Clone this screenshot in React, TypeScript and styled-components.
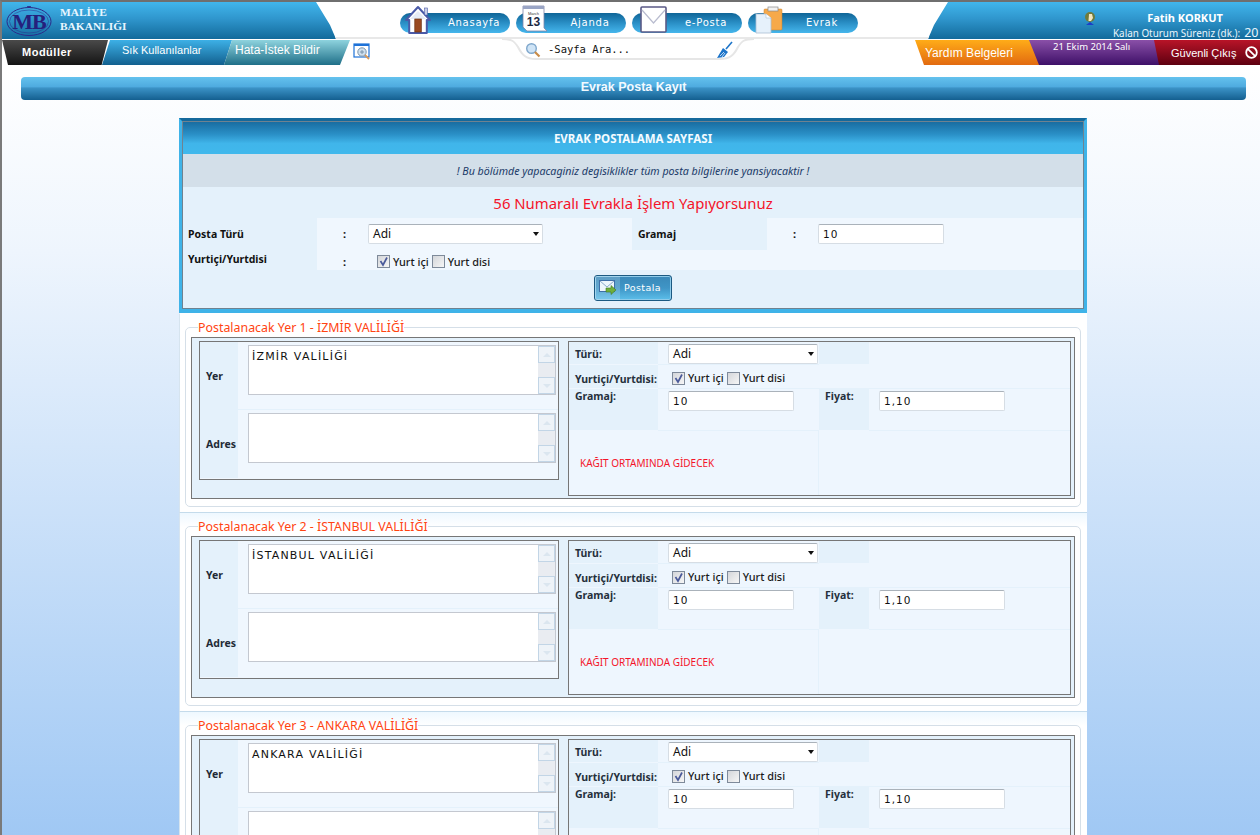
import React from "react";
import styled, { createGlobalStyle } from "styled-components";

const Global = createGlobalStyle`
  html, body { margin: 0; padding: 0; height: 835px; overflow: hidden; background: #fff; }
  * { box-sizing: border-box; }
`;

const UI = `"Noto Sans", "Liberation Sans", sans-serif`;
const MONO = `"DejaVu Sans Mono", "Liberation Mono", monospace`;
const WIDE = `"DejaVu Sans", "Liberation Sans", sans-serif`;

const Page = styled.div`
  height: 835px;
  overflow: hidden;
  border-top: 2px solid #6f6f6f;
  border-left: 2px solid #7a7a7a;
  background: linear-gradient(180deg, #ffffff 8%, #eef5fd 30%, #a0c8f4 100%);
  font-family: ${UI};
`;

const Header = styled.header`
  display: flex;
  height: 38px;
  background: linear-gradient(180deg, #41b6ec 0%, #2f96cd 45%, #126a9b 100%);
  border-bottom: 1px solid #fff;
`;
const Brand = styled.div`
  width: 314px;
  display: flex;
  align-items: center;
  padding-left: 3px;
  gap: 7px;
`;
const BrandText = styled.div`
  font: bold 11.4px/14px "Liberation Serif", serif;
  color: #e8f6ff;
  margin-top: -4px;
`;
const CenterPanel = styled.nav`
  width: 632px;
  display: flex;
  gap: 6px;
  padding: 11px 0 0 84px;
  background: #fff;
  border-bottom: 2px solid #e8e8e8;
  clip-path: polygon(0 0, 100% 0, calc(100% - 14px) 62%, calc(100% - 20px) 100%, 20px 100%, 14px 62%);
`;
const NavPill = styled.div`
  width: 110px;
  height: 20px;
  border-radius: 10px;
  background: linear-gradient(180deg, #0f6597 0%, #2a8fc6 50%, #45b6ec 100%);
  display: flex;
  align-items: flex-start;
`;
const NavIcon = styled.span`
  display: block;
  width: 34px;
  height: 30px;
  margin: -8px 0 0 4px;
  flex: none;
`;
const NavLabel = styled.span`
  flex: 1;
  text-align: center;
  color: #fff;
  font: 10px/20px ${WIDE};
  letter-spacing: 0.75px;
`;
const UserBox = styled.div`
  flex: 1;
  display: flex;
  padding: 9px 0 0 136px;
  color: #fff;
`;
const UserText = styled.div`
  margin-left: 14px;
  width: 150px;
  text-align: center;
`;
const UserName = styled.div`
  font: bold 11px/14px ${UI};
  color: #fff;
`;
const Session = styled.div`
  font: 9.9px/14px ${UI};
  white-space: nowrap;
  color: #eaf6fd;
  margin: 1px 0 0 3px;
  display: flex;
  align-items: baseline;
  gap: 4px;
`;
const SessionNum = styled.span`
  font-size: 12.5px;
`;

const SubBar = styled.div`
  display: flex;
  height: 25px;
  background: #fff;
`;
const Tab = styled.div<{ $bg: string; $w: number; $clip: string; $ml?: number; $pl: number; $fs?: number }>`
  width: ${(p) => p.$w}px;
  margin-left: ${(p) => p.$ml ?? 0}px;
  background: ${(p) => p.$bg};
  clip-path: ${(p) => p.$clip};
  padding-left: ${(p) => p.$pl}px;
  color: #fff;
  font: ${(p) => p.$fs ?? 11.5}px/21px "Liberation Sans", sans-serif;
  white-space: nowrap;
`;
const BoldTab = styled(Tab)`
  font: bold 11px/25px "Liberation Sans", sans-serif;
  letter-spacing: 0.5px;
`;
const HelpTab = styled(Tab)`
  line-height: 26px;
`;
const DateTab = styled(Tab)`
  font: 9.5px/13px ${UI};
`;
const RedTab = styled(Tab)`
  display: flex;
  align-items: center;
  gap: 9px;
  line-height: 26px;
`;
const ZoomIcon = styled.span`
  display: block;
  width: 18px;
  height: 18px;
  margin: 3px 0 0 3px;
  flex: none;
`;
const SearchBox = styled.div`
  position: relative;
  width: 252px;
  height: 24px;
  margin: -2px 0 0 131px;
  display: flex;
  align-items: center;
  padding: 0 20px 3px 23px;
  flex: none;
`;
const SearchOutline = styled.svg`
  position: absolute;
  left: 0;
  top: 0;
`;
const SearchGlyph = styled.span`
  position: relative;
  display: block;
  height: 16px;
`;
const BroomGlyph = styled(SearchGlyph)`
  height: 18px;
  margin: 3px 0 0 auto;
`;
const SearchText = styled.span`
  font: 10.5px/14px ${MONO};
  color: #111;
  margin-left: 7px;
  position: relative;
`;
const RightTabs = styled.div`
  display: flex;
  margin-left: auto;
`;

const TitleBar = styled.h1`
  margin: 12px 14px 18px 19px;
  height: 23px;
  border-radius: 4px;
  background: linear-gradient(180deg, #64c2ee 0%, #4fabdf 42%, #3b92c6 48%, #145f90 100%);
  color: #f2faff;
  font: bold 12.5px/20px "Liberation Sans", sans-serif;
  text-align: center;
`;

const Main = styled.main`
  width: 908px;
  margin-left: 177px;
  background: #fff;
`;
const FormBox = styled.section`
  border: 3px solid #3fb3e8;
  border-top-color: #15699c;
  border-bottom-width: 4px;
`;
const FormInner = styled.div`
  outline: 1px solid #6f8290;
  outline-offset: -1px;
  background: #e4f1fb;
`;
const FormHead = styled.div`
  height: 33px;
  background: linear-gradient(180deg, #176a9e 0%, #2a8fc6 40%, #40b5ea 68%, #40b8ec 100%);
  color: #f4fbff;
  font: bold 11.5px/35px ${UI};
  text-align: center;
`;
const Notice = styled.div`
  height: 33px;
  background: #d3dfe9;
  color: #1a3a68;
  font: italic 10.66px/34px ${UI};
  text-align: center;
`;
const RedTitle = styled.div`
  height: 31px;
  color: #f4142a;
  font: 14.9px/33px ${UI};
  text-align: center;
`;
const FormGrid = styled.div`
  display: grid;
  grid-template-columns: 135px 315px 135px 1fr;
  grid-template-rows: 32px 20px;
  background: #f0f7fe;
`;
const LabelCell = styled.div<{ $light?: boolean; $lh?: number }>`
  background: ${(p) => (p.$light ? "transparent" : "#e4f1fb")};
  padding-left: 6px;
  font: bold 10.5px/${(p) => p.$lh ?? 32}px ${UI};
  color: #111;
`;
const ValueCell = styled.div<{ $row?: boolean }>`
  display: flex;
  align-items: ${(p) => (p.$row ? "center" : "flex-start")};
  padding: ${(p) => (p.$row ? 3 : 6)}px 0 0 26px;
  font: bold 11px/20px ${UI};
  color: #111;
`;
const Colon = styled.span`
  width: 25px;
  flex: none;
  line-height: 20px;
`;
const CheckGap = styled.span`
  width: 9px;
  flex: none;
`;
const SelectBox = styled.div<{ $w: number }>`
  position: relative;
  width: ${(p) => p.$w}px;
  height: 20px;
  background: #fff;
  border: 1px solid #d6dde4;
  border-top-color: #aab2ba;
  border-radius: 2px;
  font: 12px/18px ${UI};
  color: #111;
  padding-left: 4px;
  &::after {
    content: "";
    position: absolute;
    right: 3px;
    top: 7px;
    border: 4px solid transparent;
    border-top: 4px solid #111;
    border-left-width: 3.5px;
    border-right-width: 3.5px;
  }
`;
const TextInput = styled.input<{ $w: number }>`
  display: block;
  width: ${(p) => p.$w}px;
  height: 20px;
  background: #fff;
  border: 1px solid #d6dde4;
  border-top-color: #aab2ba;
  border-radius: 2px;
  font: 10.5px/18px ${WIDE};
  letter-spacing: 1px;
  color: #111;
  padding: 0 4px;
  outline: none;
`;
const CheckRow = styled.div`
  display: flex;
  align-items: center;
  font: 500 10.9px/14px ${UI};
  color: #1a1a1a;
`;
const CheckBox = styled.span`
  display: block;
  width: 13px;
  height: 13px;
  border: 1px solid #7e8a9a;
  background: linear-gradient(135deg, #d4d6da, #f6f6f6);
  margin-right: 3px;
  flex: none;
`;
const CheckMark = styled.svg`
  display: block;
`;
const CheckText = styled.span`
  margin-right: 3px;
`;
const ButtonRow = styled.div`
  height: 39px;
  display: flex;
  justify-content: center;
  padding: 5px 0 0 0;
`;
const PostButton = styled.div`
  width: 78px;
  height: 26px;
  border: 1px solid #1c5a82;
  border-radius: 3px;
  box-shadow: inset 0 0 0 1px #8ecbea;
  background: linear-gradient(180deg, #3a88b8 0%, #3f95c6 50%, #5cbfea 100%);
  display: flex;
  color: #fff;
  font: 9.5px/23px ${WIDE};
  letter-spacing: 0.4px;
`;
const ButtonIcon = styled.span`
  display: block;
  width: 25px;
  height: 24px;
  background: rgba(255, 255, 255, 0.18);
  padding: 4px 0 0 4px;
  margin-right: 4px;
`;

const Section = styled.section<{ $first?: boolean }>`
  height: 199px;
  padding: 7px 6px 0 5px;
  border-left: 1px solid #d6e4ef;
  border-top: 1px solid ${(p) => (p.$first ? "#fff" : "#c4dbeb")};
  background: linear-gradient(180deg, ${(p) => (p.$first ? "#fff" : "#eef8ff")} 0, #fff 14px);
`;
const Field = styled.fieldset`
  margin: 0;
  padding: 0 5px 5px 5px;
  height: 186px;
  border: 1px solid #d5dfe8;
  border-radius: 5px;
`;
const Legend = styled.legend`
  margin-left: 7px;
  padding: 0;
  color: #ff4412;
  font: 12.4px/13px ${UI};
  white-space: nowrap;
`;
const SectionFrame = styled.div`
  height: 162px;
  margin-top: 3px;
  border: 1px solid #767676;
  background: #e4f1fb;
  display: flex;
  padding: 3px 3px 0 7px;
  gap: 9px;
`;
const LeftTable = styled.div`
  width: 360px;
  height: 139px;
  border: 1px solid #767676;
  background: #f0f7fe;
`;
const PlaceRow = styled.div`
  height: 68px;
  display: flex;
  border-bottom: 1px solid #e4f1fb;
  &:last-child { border-bottom: 0; }
`;
const PlaceLabel = styled.div`
  width: 38px;
  background: #e4f1fb;
  flex: none;
  padding-left: 6px;
  font: bold 10.5px/68px ${UI};
  color: #1f2a36;
`;
const AreaWrap = styled.div`
  position: relative;
  width: 308px;
  height: 50px;
  margin: 3px 0 0 10px;
`;
const Area = styled.textarea`
  display: block;
  width: 100%;
  height: 100%;
  resize: none;
  overflow: hidden;
  border: 1px solid #c4c8d0;
  background: #fff;
  padding: 3px 22px 0 3px;
  font: 11px/15px ${WIDE};
  letter-spacing: 1.2px;
  color: #111;
  outline: none;
`;
const FakeScroll = styled.div`
  position: absolute;
  right: 1px;
  top: 1px;
  bottom: 1px;
  width: 17px;
  background: #e9ecf1;
  display: flex;
  flex-direction: column;
  justify-content: space-between;
`;
const ScrollBtn = styled.div<{ $down?: boolean }>`
  height: 17px;
  background: #eef3f8;
  border: 1px solid #c2d5e6;
  display: flex;
  align-items: center;
  justify-content: center;
  &::after {
    content: "";
    border: 4px solid transparent;
    border-top-width: ${(p) => (p.$down ? 4 : 0)}px;
    border-bottom-width: ${(p) => (p.$down ? 0 : 4)}px;
    border-top-color: #dbe6ef;
    border-bottom-color: #dbe6ef;
  }
`;
const RightTable = styled.div`
  width: 503px;
  height: 155px;
  border: 1px solid #767676;
  background: #eef6fe;
  display: grid;
  grid-template-columns: 89px 161px 50px 1fr;
  grid-template-rows: 23px 24px 42px 1fr;
`;
const RLabel = styled.div<{ $top?: number }>`
  background: #e4f1fb;
  padding: ${(p) => p.$top ?? 5}px 0 0 6px;
  font: bold 10.5px/14px ${UI};
  color: #25303c;
  white-space: nowrap;
  border-bottom: 1px solid #eef6fe;
`;
const RValue = styled.div<{ $span?: number }>`
  grid-column: span ${(p) => p.$span ?? 1};
  padding: 2px 0 0 10px;
  border-bottom: 1px solid #e4f1fb;
`;
const RCheck = styled(RValue)`
  padding: 6px 0 0 14px;
`;
const RNote = styled.div`
  grid-column: span 2;
  border-right: 1px solid #e4f1fb;
  color: #f4142a;
  font: 10px/64px ${UI};
  padding-left: 11px;
`;
const RBlank = styled.div<{ $span?: number }>`
  grid-column: span ${(p) => p.$span ?? 1};
`;

const Logo = () => (
  <svg width="48" height="34" viewBox="0 0 48 34">
    <ellipse cx="24" cy="17.5" rx="22" ry="14" fill="none" stroke="#2c2a8a" strokeWidth="1" />
    <ellipse cx="24" cy="17.5" rx="19.5" ry="11.5" fill="none" stroke="#2c2a8a" strokeWidth=".5" />
    <path d="M22 2.5 H26 M24 2 V4" stroke="#2c2a8a" strokeWidth=".8" />
    <text x="24" y="25" textAnchor="middle" fontFamily="Liberation Serif, serif" fontWeight="bold" fontSize="22" fill="#25207c" letterSpacing="-1">MB</text>
  </svg>
);
const House = () => (
  <svg width="34" height="30" viewBox="0 0 34 30">
    <path d="M2 15 L14 2 L26 15 L22.8 15 L22.8 28 L5.2 28 L5.2 15 Z" fill="#fff" stroke="#4a5aa8" strokeWidth="2" strokeLinejoin="round" />
    <rect x="20.5" y="3" width="3" height="7" fill="#c9cfe6" stroke="#4a5aa8" strokeWidth=".6" />
    <path d="M14 6 L22 14 L6 14 Z" fill="#e6ebf6" />
    <rect x="10.8" y="14" width="6.5" height="13" fill="#9a4a22" stroke="#6b2e10" strokeWidth=".7" />
  </svg>
);
const Calendar = () => (
  <svg width="34" height="30" viewBox="0 0 34 30">
    <path d="M3 1 H24 L24 23 L27 26 H7 L3 22 Z" fill="#fff" stroke="#7d86a8" strokeWidth=".8" />
    <rect x="3" y="1" width="21" height="3" fill="#9aa5c5" />
    <text x="13.5" y="10" textAnchor="middle" fontSize="4" fontFamily="Liberation Sans, sans-serif" fill="#333">March</text>
    <text x="13.5" y="21" textAnchor="middle" fontSize="12" fontWeight="bold" fontFamily="Liberation Sans, sans-serif" fill="#1c2a44">13</text>
  </svg>
);
const Envelope = () => (
  <svg width="34" height="30" viewBox="0 0 34 30">
    <rect x="5" y="2" width="25" height="25" fill="#fff" stroke="#5b5a86" strokeWidth="1.6" rx="1" />
    <path d="M6 5 L17.5 18 L29 5" fill="none" stroke="#b9bccf" strokeWidth="1.2" />
  </svg>
);
const Clipboard = () => (
  <svg width="34" height="30" viewBox="0 0 34 30">
    <rect x="12" y="4" width="18" height="21" rx="1" fill="#f6a94a" stroke="#c9802c" strokeWidth=".5" />
    <rect x="16" y="2" width="10" height="4" fill="#f2f2f2" stroke="#888" strokeWidth=".7" />
    <path d="M4 9 H14 L19 13 V28 H4 Z" fill="#e6f1fb" stroke="#a9bfd4" strokeWidth=".8" />
    <path d="M14 9 V13 H19" fill="#fff" stroke="#a9bfd4" strokeWidth=".6" />
  </svg>
);
const Lens = () => (
  <svg width="16" height="16" viewBox="0 0 16 16">
    <circle cx="6.5" cy="6.5" r="4.8" fill="#cfe4f6" stroke="#7fa7cc" strokeWidth="1.4" />
    <path d="M10 10 L14.5 14.5" stroke="#c98c48" strokeWidth="2.2" />
  </svg>
);
const Broom = () => (
  <svg width="18" height="18" viewBox="0 0 16 18">
    <path d="M15 1 L9 8" stroke="#1c74c9" strokeWidth="1.6" />
    <path d="M6 7 L11 11 L7 16 L0 17 Z" fill="#1c74c9" />
    <path d="M3 15 L7 11 M5 16 L8 12" stroke="#fff" strokeWidth=".7" />
  </svg>
);
const WinLens = () => (
  <svg width="18" height="18" viewBox="0 0 18 18">
    <rect x="1" y="1" width="15" height="13" fill="#fff" stroke="#1e72d8" strokeWidth="1.2" />
    <rect x="1" y="1" width="15" height="2" fill="#1e72d8" />
    <circle cx="9" cy="9" r="4.2" fill="#cfe0ee" stroke="#7c94ab" />
    <path d="M7 9 H11 M9 7 V11" stroke="#6b86a0" strokeWidth=".8" />
    <path d="M12 12 L16 16" stroke="#d89a5a" strokeWidth="1.8" />
  </svg>
);
const Avatar = () => (
  <svg width="12" height="15" viewBox="0 0 12 15">
    <circle cx="6" cy="6" r="5" fill="#6e7a3c" />
    <path d="M5 3 H8 L9 7 L7 10 H4.5 Z" fill="#f4e6c0" />
    <path d="M2 14 L6 11 L10 14 Z" fill="#1a3ec8" />
  </svg>
);
const NoEntry = () => (
  <svg width="13" height="13" viewBox="0 0 13 13">
    <circle cx="6.5" cy="6.5" r="5.3" fill="none" stroke="#fff" strokeWidth="1.8" />
    <path d="M2.8 2.8 L10.2 10.2" stroke="#fff" strokeWidth="1.8" />
  </svg>
);
const MailArrow = () => (
  <svg width="18" height="15" viewBox="0 0 18 15">
    <rect x=".5" y=".5" width="15" height="11" fill="#eef5fc" stroke="#3f6fa8" />
    <path d="M1 1 L8 7 L15 1" fill="none" stroke="#8aa9cc" />
    <path d="M7 8 H12 V5.5 L17 10 L12 14.5 V12 H7 Z" fill="#6fae3c" stroke="#3f7a20" strokeWidth=".6" />
  </svg>
);

const nav = [
  { label: "Anasayfa", icon: <House /> },
  { label: "Ajanda", icon: <Calendar /> },
  { label: "e-Posta", icon: <Envelope /> },
  { label: "Evrak", icon: <Clipboard /> },
];
const places = ["İZMİR VALİLİĞİ", "İSTANBUL VALİLİĞİ", "ANKARA VALİLİĞİ"];

const ScrollBar = () => (
  <FakeScroll>
    <ScrollBtn />
    <ScrollBtn $down />
  </FakeScroll>
);

const Checks = () => (
  <CheckRow>
    <CheckBox>
      <CheckMark width="11" height="11" viewBox="0 0 11 11">
        <path d="M2.5 5 L5 9 L9 1.5" fill="none" stroke="#4a5a9a" strokeWidth="1.7" />
      </CheckMark>
    </CheckBox>
    <CheckText>Yurt içi</CheckText>
    <CheckBox />
    <CheckText>Yurt disi</CheckText>
  </CheckRow>
);

const PlaceSection = ({ name, index }: { name: string; index: number }) => (
  <Section $first={index === 0}>
    <Field>
      <Legend>{`Postalanacak Yer ${index + 1} - ${name}`}</Legend>
      <SectionFrame>
        <LeftTable>
          <PlaceRow>
            <PlaceLabel>Yer</PlaceLabel>
            <AreaWrap>
              <Area defaultValue={name} />
              <ScrollBar />
            </AreaWrap>
          </PlaceRow>
          <PlaceRow>
            <PlaceLabel>Adres</PlaceLabel>
            <AreaWrap>
              <Area defaultValue="" />
              <ScrollBar />
            </AreaWrap>
          </PlaceRow>
        </LeftTable>
        <RightTable>
          <RLabel>Türü:</RLabel>
          <RValue><SelectBox $w={150}>Adi</SelectBox></RValue>
          <RLabel />
          <RBlank />
          <RLabel $top={7}>Yurtiçi/Yurtdisi:</RLabel>
          <RCheck $span={3}><Checks /></RCheck>
          <RLabel $top={0}>Gramaj:</RLabel>
          <RValue><TextInput $w={126} defaultValue="10" /></RValue>
          <RLabel $top={0}>Fiyat:</RLabel>
          <RValue><TextInput $w={126} defaultValue="1,10" /></RValue>
          <RNote>KAĞIT ORTAMINDA GİDECEK</RNote>
          <RBlank $span={2} />
        </RightTable>
      </SectionFrame>
    </Field>
  </Section>
);

export default function App() {
  return (
    <Page>
      <Global />
      <Header>
        <Brand>
          <Logo />
          <BrandText>MALİYE<br />BAKANLIĞI</BrandText>
        </Brand>
        <CenterPanel>
          {nav.map((n) => (
            <NavPill key={n.label}>
              <NavIcon>{n.icon}</NavIcon>
              <NavLabel>{n.label}</NavLabel>
            </NavPill>
          ))}
        </CenterPanel>
        <UserBox>
          <Avatar />
          <UserText>
            <UserName>Fatih KORKUT</UserName>
            <Session>Kalan Oturum Süreniz (dk.):<SessionNum>20</SessionNum></Session>
          </UserText>
        </UserBox>
      </Header>
      <SubBar>
        <BoldTab $w={106} $pl={20} $bg="linear-gradient(180deg,#4a4a4a,#141414)" $clip="polygon(0 0,100% 0,94% 100%,6px 100%)">Modüller</BoldTab>
        <Tab $w={130} $ml={-6} $pl={20} $fs={11} $bg="linear-gradient(180deg,#3db0e6,#12608f)" $clip="polygon(8px 0,100% 0,calc(100% - 8px) 100%,0 100%)">Sık Kullanılanlar</Tab>
        <Tab $w={126} $ml={-8} $pl={11} $fs={12} $bg="linear-gradient(180deg,#8ed3de,#1f6f88)" $clip="polygon(8px 0,100% 0,calc(100% - 10px) 100%,0 100%)">Hata-İstek Bildir</Tab>
        <ZoomIcon><WinLens /></ZoomIcon>
        <SearchBox>
          <SearchOutline width="252" height="24" viewBox="0 0 252 24">
            <path d="M0 1 C10 1 12 3 16 9 C20 17 24 21 34 21 H218 C228 21 232 17 236 9 C240 3 242 1 252 1" fill="#fff" stroke="#e6e6e6" strokeWidth="2" />
          </SearchOutline>
          <SearchGlyph><Lens /></SearchGlyph>
          <SearchText>-Sayfa Ara...</SearchText>
          <BroomGlyph><Broom /></BroomGlyph>
        </SearchBox>
        <RightTabs>
          <HelpTab $w={124} $pl={10} $fs={12} $bg="linear-gradient(180deg,#ffac18,#e26a10)" $clip="polygon(0 0,100% 0,100% 100%,9px 100%)">Yardım Belgeleri</HelpTab>
          <DateTab $w={130} $ml={-10} $pl={24} $bg="linear-gradient(180deg,#8a50a8,#3e1068)" $clip="polygon(0 0,100% 0,100% 100%,10px 100%)">21 Ekim 2014 Salı</DateTab>
          <RedTab $w={106} $ml={-5} $pl={17} $fs={11} $bg="linear-gradient(180deg,#b81428,#5e0010)" $clip="polygon(0 0,100% 0,100% 100%,5px 100%)">Güvenli Çıkış<NoEntry /></RedTab>
        </RightTabs>
      </SubBar>
      <TitleBar>Evrak Posta Kayıt</TitleBar>
      <Main>
        <FormBox>
          <FormInner>
            <FormHead>EVRAK POSTALAMA SAYFASI</FormHead>
            <Notice>! Bu bölümde yapacaginiz degisiklikler tüm posta bilgilerine yansiyacaktir !</Notice>
            <RedTitle>56 Numaralı Evrakla İşlem Yapıyorsunuz</RedTitle>
            <FormGrid>
              <LabelCell>Posta Türü</LabelCell>
              <ValueCell><Colon>:</Colon><SelectBox $w={175}>Adi</SelectBox></ValueCell>
              <LabelCell>Gramaj</LabelCell>
              <ValueCell><Colon>:</Colon><TextInput $w={126} defaultValue="10" /></ValueCell>
              <LabelCell $lh={18}>Yurtiçi/Yurtdisi</LabelCell>
              <ValueCell $row><Colon>:</Colon><CheckGap /><Checks /></ValueCell>
              <LabelCell $light />
              <RBlank />
            </FormGrid>
            <ButtonRow>
              <PostButton>
                <ButtonIcon><MailArrow /></ButtonIcon>
                Postala
              </PostButton>
            </ButtonRow>
          </FormInner>
        </FormBox>
        {places.map((p, i) => (
          <PlaceSection key={p} name={p} index={i} />
        ))}
      </Main>
    </Page>
  );
}
